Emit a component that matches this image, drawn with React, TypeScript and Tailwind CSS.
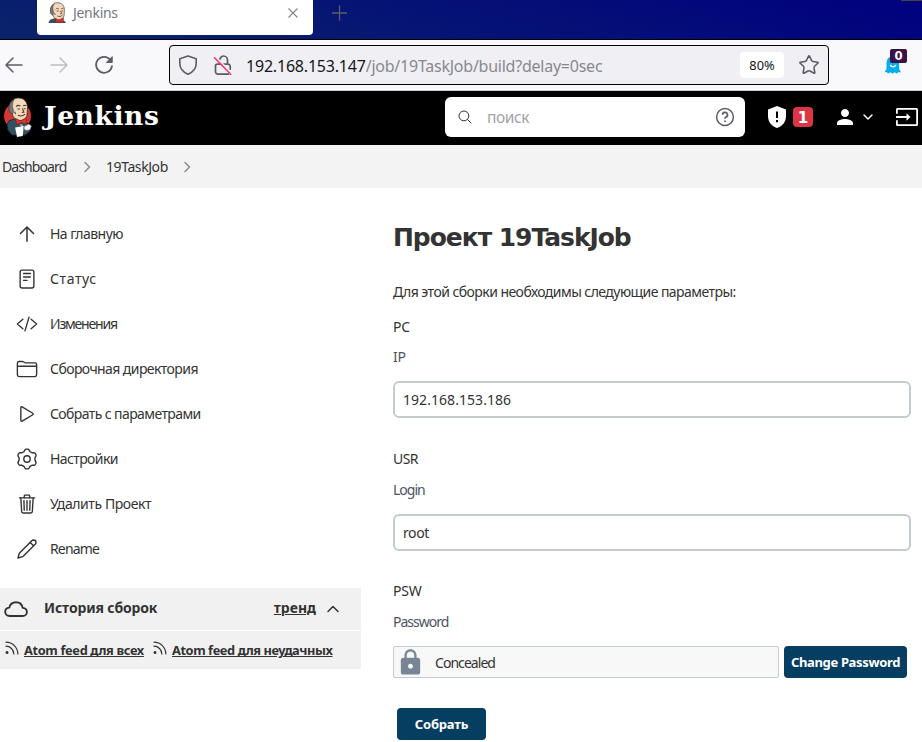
import React from "react";
import {
  IoReaderOutline,
  IoCodeSlashOutline,
  IoFolderOutline,
  IoPlayOutline,
  IoTrashOutline,
  IoSearchOutline,
} from "react-icons/io5";
import { MdPerson, MdLock } from "react-icons/md";
import { Star } from "lucide-react";

function Butler({ className, disc = false, viewBox }: { className: string; disc?: boolean; viewBox: string }) {
  return (
    <svg className={className} viewBox={viewBox} aria-hidden="true">
      {disc && <circle cx="15" cy="20" r="14.200" fill="#d33833" />}
      <path d="M6 25l6-2 9 2 6 3 1 8-5 4H9l-4-5-1-6z" fill="#335061" stroke="#16262f" strokeWidth="0.9" />
      <path d="M6.500 10C8 3.500 11.500 1 16 1c5.500 0 9.200 3.500 9.500 9.500L25 19c-1 4-4 6-7.500 6-4-.5-7-3.500-8-7-3-1-4-4-3-8z" fill="#f3d9bb" stroke="#3a2d25" strokeWidth="0.9" />
      <path d="M6.300 14C5.500 8 7.500 4.500 11.500 2.500 9.800 5.500 9.500 8 9.800 10.500L11 15l-1 3-2.500-1.500z" fill="#77757a" stroke="#3a3a3a" strokeWidth="0.5" />
      <path d="M13.500 10c1.500-1.500 3-1.500 4.500-.4M21 9.500c1-1 2-1 3.200-.2M15 12.500h2.500M21.500 12.300h2M20 12l1.800 3.800-2.300.5M15.500 19.200c3 1.500 5 1 7.500-1.200M12 15.500l1 2.500" fill="none" stroke="#49382d" strokeWidth="1.100" />
      <path d="M13 22.500l5 2.500 6-3 1 6-6-1-5 2z" fill="#d8372f" stroke="#81201c" strokeWidth="0.7" />
      <path d="M18 29l2 1-.5 3" fill="none" stroke="#c8d2d8" strokeWidth="1.200" />
      <path d="M12.500 32l9-1.500-1 10.500-6 1z" fill="#fff" />
      <path d="M22 31l5-2.500 2.500 2-1.500 4-4 .5-2-1.500z" fill="#f5f5f5" stroke="#8c8c8c" strokeWidth="0.6" />
    </svg>
  );
}

type IconProps = { className: string };

function ArrowUp({ className }: IconProps) {
  return (
    <svg className={className} viewBox="0 0 22 22" fill="none" stroke="#333" strokeWidth="1.500" strokeLinecap="round" strokeLinejoin="round">
      <path d="M11 18.200V4M4.500 10.500L11 4l6.500 6.500" />
    </svg>
  );
}

function Pencil({ className }: IconProps) {
  return (
    <svg className={className} viewBox="0 0 22 22" fill="none" stroke="#333" strokeWidth="1.400" strokeLinejoin="round">
      <path d="M2 20l1.300-4.700L15.800 2.800a2.600 2.600 0 0 1 1.800-.8 2.400 2.400 0 0 1 2.400 2.400 2.600 2.600 0 0 1-.8 1.800L6.700 18.700zM14.200 4.400l3.400 3.400" />
    </svg>
  );
}

const gearPath =
  "M" +
  Array.from({ length: 120 }, (_, i) => {
    const angle = (i / 120) * Math.PI * 2;
    const lobe = Math.tanh(1.500 * Math.cos(6 * angle));
    const radius = 8.900 + 1.100 * lobe;
    return `${(11 + radius * Math.sin(angle)).toFixed(2)} ${(11 - radius * Math.cos(angle)).toFixed(2)}`;
  }).join("L") +
  "Z";

function Gear({ className }: IconProps) {
  return (
    <svg className={className} viewBox="0 0 22 22" fill="none" stroke="#333" strokeWidth="1.400" strokeLinejoin="round">
      <path d={gearPath} />
      <circle cx="11" cy="11" r="3.200" />
    </svg>
  );
}

function Cloud({ className }: IconProps) {
  return (
    <svg className={className} viewBox="0 0 24 24" fill="none" stroke="#333" strokeWidth="1.900" strokeLinejoin="round">
      <path d="M18.800 19H5.500A4.300 4.300 0 0 1 1.200 14.800c0-2.400 2-4 4.100-4.200C6 7.500 8.700 5.300 12 5.300c3.500 0 6 2.300 6.700 5.600 2.300.2 4.200 1.600 4.200 4 0 2.600-2 4.100-4.100 4.100z" />
    </svg>
  );
}

function RssIcon() {
  return (
    <svg className="-mt-[4px] size-4 shrink-0" viewBox="0 0 16 16" fill="none" stroke="#333" strokeWidth="1.200" strokeLinecap="round">
      <path d="M2 2.200C8.500 2.200 13.800 7.500 13.800 14M2 6.200c4.300 0 7.800 3.500 7.800 7.800" />
      <circle cx="3" cy="12.500" r="0.900" fill="#333" />
    </svg>
  );
}

function Chevron({ className, d }: { className: string; d: string }) {
  return (
    <svg className={className} viewBox="0 0 12 12" fill="none" stroke="currentColor" strokeWidth="1.500" strokeLinecap="round" strokeLinejoin="round">
      <path d={d} />
    </svg>
  );
}

function BrowserChrome() {
  return (
    <>
      <div className="flex h-10 border-b border-black bg-[linear-gradient(15deg,#0a246a,#000080)] pl-[37px]">
        <div className="flex h-[35px] w-[276px] items-start rounded-b-[4px] bg-white pl-[11px]">
          <Butler className="mt-[2px] h-[21px] w-[19px]" viewBox="4 0 24 29" />
          <span className="ml-[6px] mt-[2px] text-[14px] leading-[22px] tracking-[-0.3px] text-[#77777b]">Jenkins</span>
          <svg className="ml-auto mr-[14px] mt-[7px] size-3" viewBox="0 0 12 12" stroke="#85858a" strokeWidth="1.100">
            <path d="M1.500 1.500l9 9M10.500 1.500l-9 9" />
          </svg>
        </div>
        <svg className="ml-[18px] mt-[5px] size-4" viewBox="0 0 16 16" stroke="#5d5d66" strokeWidth="1.300">
          <path d="M8.500 .5v15M1 8h15" />
        </svg>
        <div className="ml-auto h-px w-[21px] bg-[#444]" />
      </div>
      <div className="flex h-[51px] items-center border-b border-[#ccccce] bg-[#f9f9fb]">
        <svg className="ml-[5px] size-[18px]" viewBox="0 0 18 18" fill="none" stroke="#5b5b66" strokeWidth="1.500" strokeLinecap="round" strokeLinejoin="round">
          <path d="M17 9H1M8 2L1 9l7 7" />
        </svg>
        <svg className="ml-[27px] size-[18px]" viewBox="0 0 18 18" fill="none" stroke="#bdbdc2" strokeWidth="1.500" strokeLinecap="round" strokeLinejoin="round">
          <path d="M1 9h16M10 2l7 7-7 7" />
        </svg>
        <svg className="ml-[26px] size-5" viewBox="0 0 20 20" fill="none" stroke="#5b5b66" strokeWidth="1.700" strokeLinecap="round">
          <path d="M16.500 5A8 8 0 1 0 18 11" />
          <path d="M18.200 2v5.500h-5.500z" fill="#5b5b66" strokeWidth="1" strokeLinejoin="round" />
        </svg>
        <div className="ml-[55px] flex h-10 w-[660px] items-center rounded-[4px] border border-black bg-[#f0f0f4]">
          <svg className="ml-[8px] size-5" viewBox="0 0 20 20" fill="none" stroke="#5b5b66" strokeWidth="1.600" strokeLinejoin="round">
            <path d="M10 .9l8.200 2.900v4.500c0 5-3 8.800-8.200 11-5.200-2.200-8.200-6-8.200-11V3.800z" />
          </svg>
          <svg className="ml-[15px] size-5" viewBox="0 0 20 20" fill="none" stroke="#5b5b66" strokeWidth="1.700" strokeLinecap="round">
            <path d="M15.500 19.200H5a2.500 2.500 0 0 1-2.500-2.500V11A1.800 1.800 0 0 1 4.300 9.200h10.900a2 2 0 0 1 2 2v3M6.800 4.500C7.500 2 9 1 10.600 1c2.300 0 3.900 1.900 3.900 4.200v4" />
            <path d="M2.800 1.800l16.200 16.400" stroke="#f0f0f4" strokeWidth="1.500" />
            <path d="M1.500 2.800l16.200 16.400" stroke="#ff2f5f" strokeWidth="1.500" />
          </svg>
          <span className="ml-[13px] mt-px whitespace-nowrap text-[16px] tracking-[-0.240px] text-[#88888e]">
            <span className="tracking-[-0.2px] text-[#15141a]">192.168.153.147</span>/job/19TaskJob/build?delay=0sec
          </span>
          <span className="ml-auto flex h-[26px] w-11 items-center justify-center rounded-[4px] bg-white pt-[2px] text-[12.800px] text-[#15141a]">80%</span>
          <Star className="ml-[14px] mr-[8px] size-[22px] text-[#5b5b66]" strokeWidth={1.7} />
        </div>
        <div className="relative ml-[55px] size-[22px]">
          <svg className="absolute left-0 top-0 h-[22px] w-[18px]" viewBox="0 0 18 22">
            <path d="M2.500 9a6.300 7 0 0 1 12.600 0v6l2 3.500-2.500-.5-1.600 1.500-2.500-1.200-2 1.500-2-1.500-2.500 1.200-1.500-1.500-2 .3 2-3.300z" fill="#00aef0" />
            <path d="M6 11q3 3.500 6 0" stroke="#fff" strokeWidth="1.300" fill="none" />
          </svg>
          <span className="absolute -top-[5px] left-[6px] flex h-[14px] w-[17px] items-center justify-center rounded-[2px] bg-[#3a1245] font-[DejaVu_Sans_Condensed,sans-serif] text-[13px] font-bold text-white">0</span>
        </div>
      </div>
    </>
  );
}

function Header() {
  return (
    <header className="flex h-[54px] items-center bg-black text-white">
      <Butler className="ml-[3px] -mt-[3px] h-[40px] w-[29px] shrink-0" viewBox="0 0 30 42" disc />
      <span className="-mt-[5px] ml-[12px] w-[120px] whitespace-nowrap font-[DejaVu_Serif,serif] text-[26.500px] font-bold leading-[38px] tracking-[0.6px]">Jenkins</span>
      <div className="-mt-[2px] ml-[281px] flex h-10 w-[300px] items-center rounded-[6px] bg-white">
        <IoSearchOutline className="ml-[12px] size-4 text-[#333]" />
        <span className="ml-[14px] mt-[2px] text-[15.500px] tracking-[-0.4px] text-[#a2a2a6]">поиск</span>
        <svg className="ml-auto mr-[10px] size-5" viewBox="0 0 20 20" fill="none" stroke="#5b5b66" strokeWidth="1.500">
          <circle cx="10" cy="10" r="8.400" />
          <path d="M7.500 7.800a2.500 2.500 0 1 1 3.600 2.300c-.8.4-1.100.8-1.100 1.700M10 13.600v1.500" strokeWidth="1.700" />
        </svg>
      </div>
      <svg className="-mt-[2px] ml-[23px] h-[22px] w-[18px]" viewBox="0 0 18 22">
        <path d="M9 0l9 3.600v6.700C18 16 14.200 20.500 9 22 3.800 20.500 0 16 0 10.300V3.600z" fill="#fff" />
        <path d="M9 5.500v6.500M9 14v2.200" stroke="#000" strokeWidth="2" />
      </svg>
      <span className="-mt-[2px] ml-[7px] flex size-5 items-center justify-center rounded-[4px] bg-[#dc3545] pt-[2px] font-[DejaVu_Sans,sans-serif] text-[15px] font-bold">1</span>
      <MdPerson className="-mt-[2px] ml-[20px] size-6" />
      <Chevron className="ml-[5px] -mt-[2px] size-3" d="M2 4l4 4 4-4" />
      <svg className="-mt-[2px] ml-[22px] h-[18px] w-[22px] shrink-0" viewBox="0 0 22 18" fill="none" stroke="#fff" strokeWidth="1.800">
        <path d="M.9 5.800V1.500Q.9.900 1.500.9h19q.6 0 .6.600v15q0 .6-.6.600h-19q-.6 0-.6-.6v-4.300M0 9h13" />
        <path d="M10.500 5.200L14.500 9l-4 3.800z" fill="#fff" stroke="none" />
      </svg>
    </header>
  );
}

const tasks = [
  { icon: ArrowUp, label: "На главную", track: "tracking-[-0.55px]" },
  { icon: IoReaderOutline, label: "Статус", track: "tracking-[0.6px]" },
  { icon: IoCodeSlashOutline, label: "Изменения", track: "tracking-[-1.2px]" },
  { icon: IoFolderOutline, label: "Сборочная директория", track: "tracking-[-0.58px]" },
  { icon: IoPlayOutline, label: "Собрать с параметрами", track: "tracking-[-0.6px]" },
  { icon: Gear, label: "Настройки", track: "tracking-[-0.6px]" },
  { icon: IoTrashOutline, label: "Удалить Проект", track: "tracking-[-0.41px]" },
  { icon: Pencil, label: "Rename", track: "tracking-[-0.85px]" },
];

function Sidebar() {
  return (
    <aside className="w-[361px] pt-[23px]">
      <nav>
        {tasks.map(({ icon: Icon, label, track }) => (
          <a key={label} className="flex h-[45px] items-center pl-4">
            <Icon className="size-[22px]" />
            <span className={`ml-3 text-[14px] ${track}`}>{label}</span>
          </a>
        ))}
      </nav>
      <section className="mt-[17px] bg-[#f1f1f1] font-bold">
        <div className="flex h-[43px] items-center border-b border-white pl-[4px] pr-[22px]">
          <Cloud className="size-6 shrink-0" />
          <span className="-mt-[3px] ml-4 text-[14px] tracking-[-0.15px]">История сборок</span>
          <a className="-mt-[3px] ml-auto text-[14px] underline">тренд</a>
          <Chevron className="ml-[11px] size-3" d="M1 8.500l5-5 5 5" />
        </div>
        <div className="flex h-[38px] items-center pl-[4px] text-[12.800px]">
          <RssIcon />
          <a className="ml-[4px] mt-[2px] w-[121px] whitespace-nowrap tracking-[-0.35px] underline">Atom feed для всех</a>
          <span className="ml-[7px]"><RssIcon /></span>
          <a className="ml-[4px] mt-[2px] whitespace-nowrap tracking-[-0.42px] underline">Atom feed для неудачных</a>
        </div>
      </section>
    </aside>
  );
}

type FieldProps = { name: string; nameClass: string; hint: string; hintClass: string; children: React.ReactNode };

function Field({ name, nameClass, hint, hintClass, children }: FieldProps) {
  return (
    <div>
      <div className={`leading-[30px] ${nameClass}`}>{name}</div>
      <div className={`h-[31px] leading-[31px] text-[#4d545d] ${hintClass}`}>{hint}</div>
      <div className="mt-[9px]">{children}</div>
    </div>
  );
}

export default function App() {
  return (
    <div className="h-[742px] w-[922px] overflow-hidden bg-white font-[Noto_Sans,sans-serif] text-[#333]">
      <BrowserChrome />
      <Header />
      <nav className="flex h-[43px] items-center bg-[#f3f3f3] pl-[2px] text-[14px]">
        <span className="w-[66px] whitespace-nowrap tracking-[-0.9px]">Dashboard</span>
        <Chevron className="ml-[13px] size-3 text-[#8b8b8b]" d="M4 1.500L8.500 6 4 10.500" />
        <span className="ml-[13px] w-[62px] whitespace-nowrap tracking-[-0.42px]">19TaskJob</span>
        <Chevron className="ml-[13px] size-3 text-[#8b8b8b]" d="M4 1.500L8.500 6 4 10.500" />
      </nav>
      <div className="flex">
        <Sidebar />
        <main className="ml-8 w-[518px] pt-[29px] text-[14px]">
          <h1 className="h-10 whitespace-nowrap font-[DejaVu_Sans,sans-serif] text-[25px] font-bold leading-[42px] tracking-[-1.05px]">Проект 19TaskJob</h1>
          <p className="mt-[20px] h-[30px] whitespace-nowrap leading-[30px] tracking-[-0.55px]">Для этой сборки необходимы следующие параметры:</p>
          <div className="mt-[5px]">
            <Field name="PC" nameClass="h-[29px] tracking-[-0.3px]" hint="IP" hintClass="tracking-[-0.3px]">
              <div className="flex h-[37px] items-center rounded-[6px] border-2 border-[#c3ccd1] px-2 tracking-[0.05px]">192.168.153.186</div>
            </Field>
          </div>
          <div className="mt-[26px]">
            <Field name="USR" nameClass="h-[30px] tracking-[-0.6px]" hint="Login" hintClass="tracking-[-1px]">
              <div className="flex h-[37px] items-center rounded-[6px] border-2 border-[#c3ccd1] px-2 tracking-[-0.4px]">root</div>
            </Field>
          </div>
          <div className="mt-[25px]">
            <Field name="PSW" nameClass="h-[30px] tracking-[-0.2px]" hint="Password" hintClass="tracking-[-1px]">
              <div className="flex gap-[5px]">
                <div className="flex h-8 w-[386px] items-center rounded-[2px] border border-[#c3ccd1] bg-[#f8f8f8] pl-[2px]">
                  <MdLock className="size-[29px] text-[#788594]" />
                  <span className="ml-[10px] mt-px tracking-[-0.95px]">Concealed</span>
                </div>
                <button className="h-8 w-[123px] whitespace-nowrap rounded-[4px] bg-[#063e61] pt-[2px] text-[13px] font-bold tracking-[-0.35px] text-white">Change Password</button>
              </div>
            </Field>
          </div>
          <button className="ml-[4px] mt-[30px] block h-8 w-[89px] rounded-[4px] bg-[#063e61] pt-[2px] text-[13px] font-bold tracking-[-0.2px] text-white">Собрать</button>
        </main>
      </div>
    </div>
  );
}
